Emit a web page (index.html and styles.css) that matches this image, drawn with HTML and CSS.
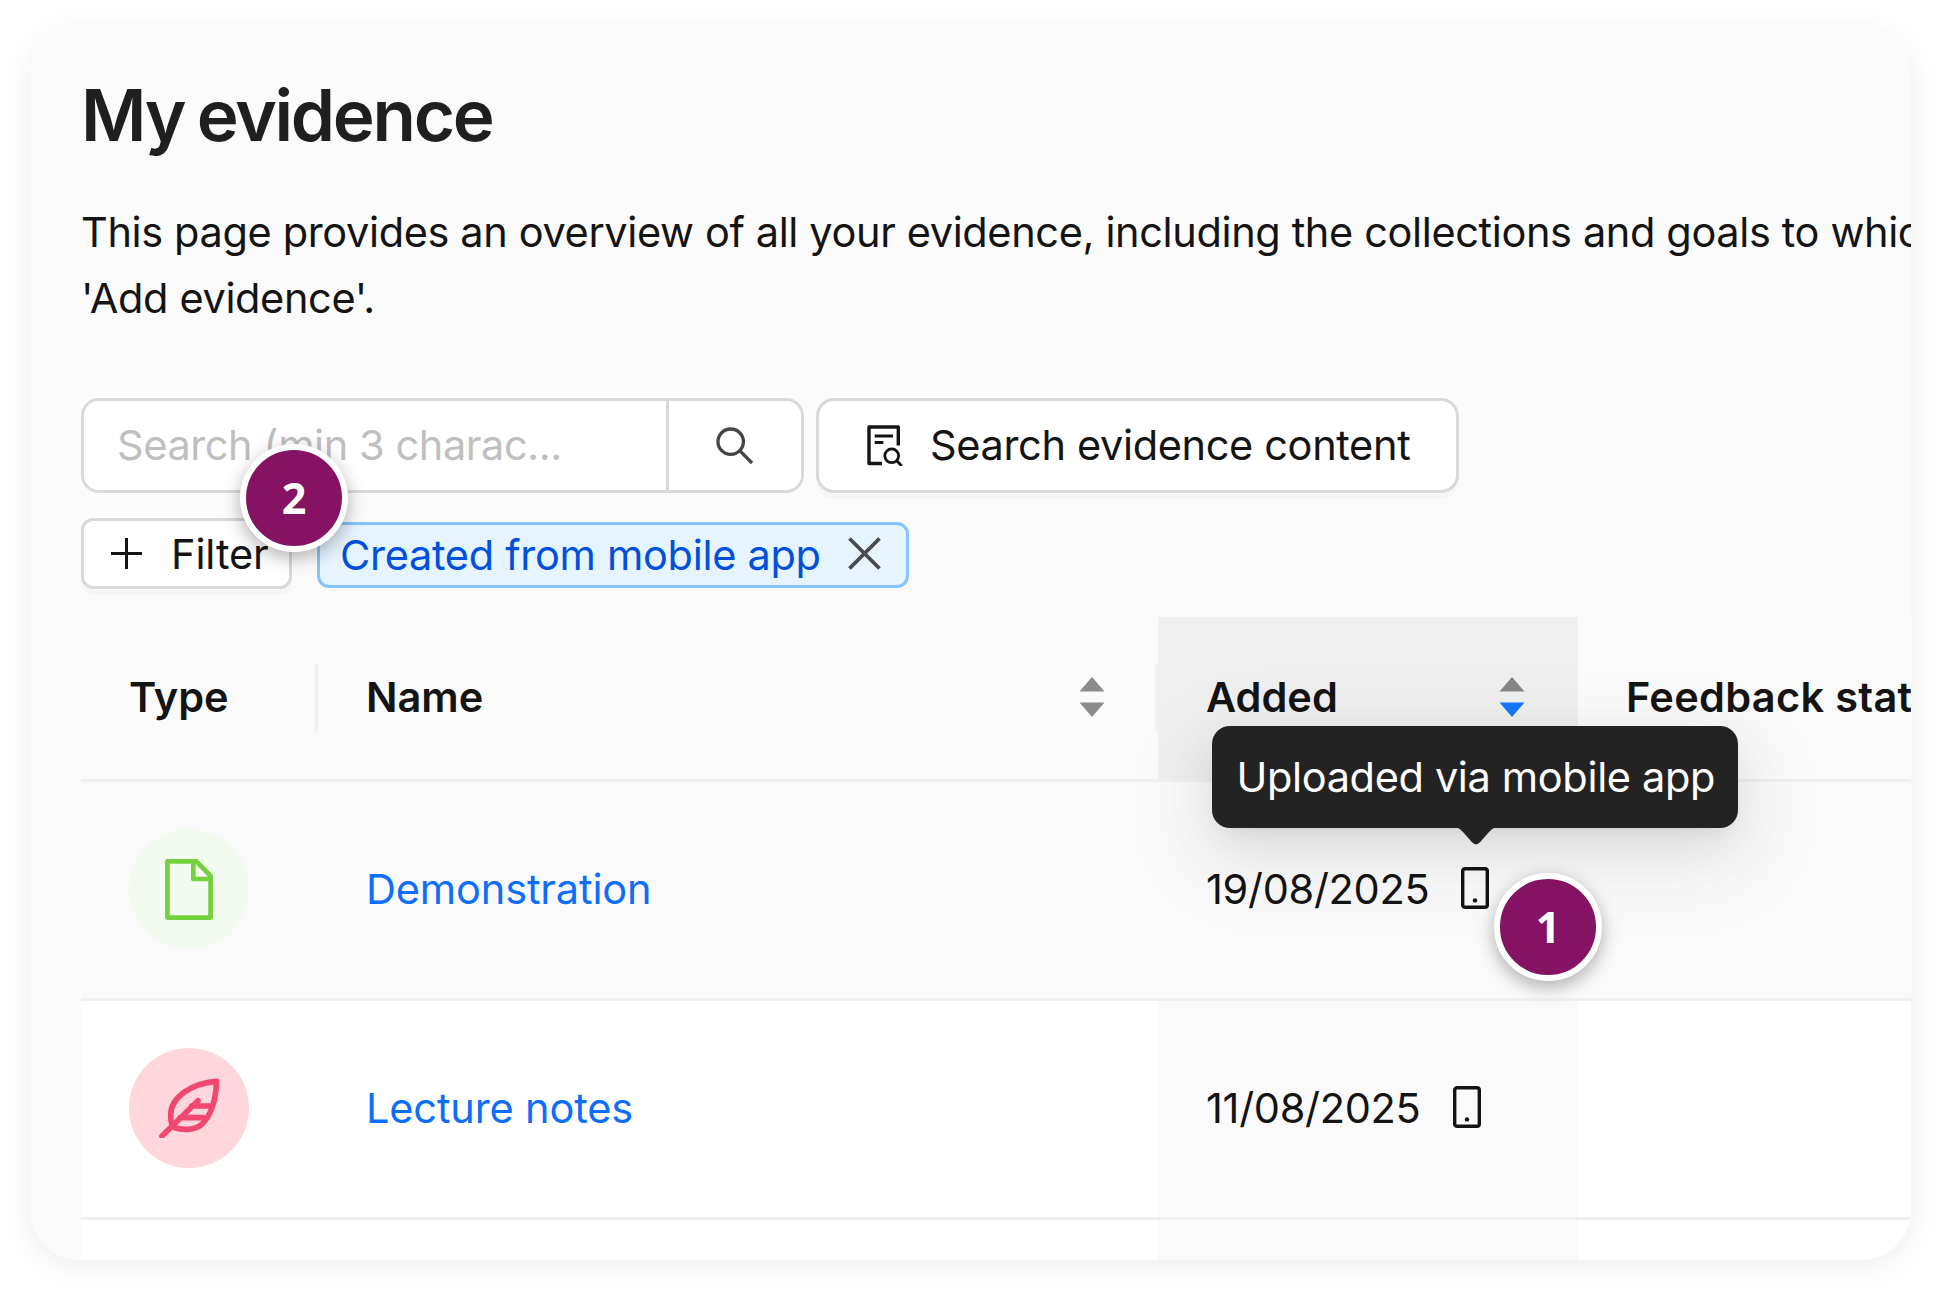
FILE: index.html
```html
<!DOCTYPE html>
<html lang="en">
<head>
    <meta charset="UTF-8">
    <meta name="viewport" content="width=device-width, initial-scale=1.0">
    <title>My evidence</title>
    <link rel="stylesheet" href="styles.css">
</head>
<body>

    <div class="panel">
        <h1>My evidence</h1>
        <p class="intro">This page provides an overview of all your evidence, including the collections and goals to which<br>'Add evidence'.</p>

        <div class="search-row">
            <div class="search-box">
                <input type="text" placeholder="Search (min 3 charac...">
                <button class="search-btn" aria-label="Search">
                    <svg width="38" height="38" viewBox="0 0 38 38" fill="none" stroke="#454545" stroke-width="3.3">
                        <circle cx="14.7" cy="14.7" r="12.7"/>
                        <path d="M23.7 23.7 36 36"/>
                    </svg>
                </button>
            </div>
            <button class="content-btn">
                <svg width="36" height="42" viewBox="0 0 36 42" fill="none" stroke="#141414" stroke-width="3.4">
                    <path d="M31.3 21.5V3H2V39.5H15" stroke-linejoin="round"/>
                    <path d="M7.7 12H26M7.7 18.5H16.3" stroke-width="3"/>
                    <circle cx="24.7" cy="31.8" r="6.9" stroke-width="2.8"/>
                    <path d="M29.7 36.8 34.8 42" stroke-width="2.8"/>
                </svg>
                <span>Search evidence content</span>
            </button>
        </div>

        <div class="filter-row">
            <button class="filter-btn">
                <svg width="31" height="31" viewBox="0 0 31 31" fill="none" stroke="#141414" stroke-width="3">
                    <path d="M15.5 0V31M0 15.5H31"/>
                </svg>
                <span>Filter</span>
            </button>
            <div class="tag">
                <span>Created from mobile app</span>
                <svg width="33" height="33" viewBox="0 0 33 33" fill="none" stroke="#484b4e" stroke-width="3.8">
                    <path d="M1.5 1.5 31.5 31.5M31.5 1.5 1.5 31.5"/>
                </svg>
            </div>
        </div>

        <table>
            <thead>
                <tr>
                    <th class="col-type">Type</th>
                    <th class="col-name">
                        <div class="sortable">
                            <span>Name</span>
                            <svg width="26" height="40" viewBox="0 0 26 40" fill="#8c8c8c">
                                <path d="M13 0 25.5 14.5H.5Z"/>
                                <path d="M13 40 25.5 25.5H.5Z"/>
                            </svg>
                        </div>
                    </th>
                    <th class="col-added">
                        <div class="sortable">
                            <span>Added</span>
                            <svg width="26" height="40" viewBox="0 0 26 40">
                                <path fill="#868686" d="M13 0 25.5 14.5H.5Z"/>
                                <path fill="#1677ff" d="M13 40 25.5 25.5H.5Z"/>
                            </svg>
                        </div>
                    </th>
                    <th class="col-feedback">Feedback status</th>
                </tr>
            </thead>
            <tbody>
                <tr class="active">
                    <td>
                        <div class="type-icon green">
                            <svg width="48" height="61" viewBox="0 0 48 61" fill="none" stroke="#73d13d" stroke-width="4.7" stroke-linejoin="round">
                                <path d="M2.4 2.4H31.5L45.6 17V58.6H2.4Z"/>
                                <path d="M28.3 2.4V20H45.6"/>
                            </svg>
                        </div>
                    </td>
                    <td><a href="#">Demonstration</a></td>
                    <td class="added">
                        <div class="date">
                            <span>19/08/2025</span>
                            <div class="phone">
                                <svg width="28" height="42" viewBox="0 0 28 42">
                                    <rect x="1.7" y="1.7" width="24.6" height="38.6" rx="2.4" fill="none" stroke="#141414" stroke-width="3.4"/>
                                    <circle cx="14" cy="33.4" r="2.2" fill="#141414"/>
                                </svg>
                                <div class="tooltip">
                                    Uploaded via mobile app
                                    <svg class="arrow" width="46" height="18" viewBox="0 0 46 18">
                                        <path fill="#232323" d="M0 0H46C41 0 39 2 36 5L27 15.3Q23 19.5 19 15.3L10 5C7 2 5 0 0 0Z"/>
                                    </svg>
                                </div>
                            </div>
                        </div>
                    </td>
                    <td></td>
                </tr>
                <tr>
                    <td>
                        <div class="type-icon pink">
                            <svg width="60" height="60" viewBox="0 0 180 180" fill="none" stroke="#f0486f" stroke-width="17" stroke-linecap="round" stroke-linejoin="round">
                                <path d="M173 10C98 16 35 56 35 112C35 128 37 139 42 146C62 157 104 158 126 141C152 118 170 74 173 10Z"/>
                                <path d="M9 174 117 68"/>
                                <path d="M98 84H154M64 119H132"/>
                            </svg>
                        </div>
                    </td>
                    <td><a href="#">Lecture notes</a></td>
                    <td class="added">
                        <div class="date">
                            <span>11/08/2025</span>
                            <div class="phone">
                                <svg width="28" height="42" viewBox="0 0 28 42">
                                    <rect x="1.7" y="1.7" width="24.6" height="38.6" rx="2.4" fill="none" stroke="#141414" stroke-width="3.4"/>
                                    <circle cx="14" cy="33.4" r="2.2" fill="#141414"/>
                                </svg>
                            </div>
                        </div>
                    </td>
                    <td></td>
                </tr>
                <tr>
                    <td></td>
                    <td></td>
                    <td class="added"></td>
                    <td></td>
                </tr>
            </tbody>
        </table>

        <div class="marker marker-one">1</div>
        <div class="marker marker-two">2</div>
    </div>

</body>
</html>
```
FILE: styles.css
```css
* {
    box-sizing: border-box;
}

body {
    font-family: "Inter", sans-serif;
    font-size: 41.5px;
    line-height: 66px;
    letter-spacing: -0.3px;
    color: #141414;
    background: #fff;
    height: 1293px;
    margin: 0;
    padding: 27px 30px 0;
}

.panel {
    position: relative;
    width: 1881px;
    height: 1233px;
    padding: 46px 0 0 51px;
    background: #fbfbfb;
    border-radius: 50px;
    box-shadow: 0 5px 30px rgba(0, 0, 0, 0.07);
    overflow: hidden;
}

h1 {
    margin: 0;
    font-size: 71px;
    font-weight: 600;
    line-height: 84px;
    letter-spacing: -2.3px;
    word-spacing: -3px;
    color: #1f1f1f;
}

.intro {
    margin: 42px 0 67px;
    letter-spacing: -0.37px;
    white-space: nowrap;
}

button, input {
    font: inherit;
    letter-spacing: inherit;
    color: #141414;
}

button {
    display: flex;
    align-items: center;
    background: #fff;
    border: 3px solid #d9d9d9;
    padding: 0;
    cursor: pointer;
}

.search-row {
    display: flex;
    gap: 12px;
    height: 95px;
}

.search-box {
    display: flex;
    width: 723px;
    background: #fff;
    border: 3px solid #d9d9d9;
    border-radius: 18px;
    overflow: hidden;
}

.search-box input {
    flex: 1;
    min-width: 0;
    padding: 0 0 2px 33px;
    border: none;
    outline: none;
    letter-spacing: -0.42px;
}

.search-box input::placeholder {
    color: #bfbfbf;
}

.search-btn {
    justify-content: center;
    width: 135px;
    border-width: 0 0 0 3px;
}

.content-btn {
    gap: 27px;
    width: 643px;
    padding: 0 0 2px 48px;
    border-radius: 18px;
    letter-spacing: -0.35px;
    box-shadow: 0 6px 0 rgba(0, 0, 0, 0.02);
}

.filter-row {
    display: flex;
    align-items: flex-start;
    gap: 25px;
    margin: 25px 0 28px;
    height: 71px;
}

.filter-btn {
    gap: 29px;
    width: 211px;
    height: 71px;
    padding-left: 27px;
    border-radius: 12px;
    letter-spacing: -0.1px;
    box-shadow: 0 6px 0 rgba(0, 0, 0, 0.02);
}

.tag {
    display: flex;
    align-items: center;
    justify-content: space-between;
    width: 592px;
    height: 66px;
    margin-top: 4px;
    padding: 0 25px 0 20px;
    background: #e6f4ff;
    border: 3px solid #84c4ff;
    border-radius: 12px;
    color: #0050dc;
}

.tag svg {
    margin-bottom: 3px;
}

table {
    width: 1830px;
    table-layout: fixed;
    border-collapse: separate;
    border-spacing: 0;
    background: #fff;
    border-top-left-radius: 24px;
}

th, td {
    padding: 0 0 2px 48px;
    text-align: left;
    border-bottom: 3px solid #f0f0f0;
    white-space: nowrap;
}

th {
    height: 165px;
    font-weight: 600;
    letter-spacing: 0;
    background: #fafafa;
}

td {
    height: 219px;
}

.col-type {
    width: 237px;
    border-top-left-radius: 24px;
    background: linear-gradient(#f0f0f0, #f0f0f0) right 47px / 3px 68px no-repeat #fafafa;
}

.col-name {
    width: 840px;
    background: linear-gradient(#f0f0f0, #f0f0f0) right 47px / 3px 68px no-repeat #fafafa;
}

.col-added {
    width: 420px;
    background: #efefef;
}

.col-feedback {
    letter-spacing: 0.3px;
}

.sortable {
    display: flex;
    align-items: center;
    justify-content: space-between;
    padding-right: 53px;
}

.active td, .added {
    background: #fafafa;
}

a {
    color: #0d6efd;
    text-decoration: none;
    letter-spacing: -0.15px;
}

.type-icon {
    display: flex;
    align-items: center;
    justify-content: center;
    width: 120px;
    height: 120px;
    border-radius: 50%;
}

.green {
    background: #f3faef;
}

.pink {
    background: #ffd6dc;
}

.date {
    display: flex;
    align-items: center;
    gap: 32px;
}

.phone {
    position: relative;
    height: 42px;
    margin-bottom: 3px;
}

.phone svg {
    display: block;
}

/* sits above the phone icon */
.tooltip {
    position: absolute;
    left: -249px;
    bottom: 81px;
    width: 526px;
    height: 102px;
    padding-left: 24px;
    line-height: 102px;
    letter-spacing: -0.35px;
    color: #fff;
    background: #232323;
    border-radius: 18px;
    box-shadow: 0 18px 48px rgba(0, 0, 0, 0.08), 0 9px 18px -12px rgba(0, 0, 0, 0.12), 0 27px 84px 24px rgba(0, 0, 0, 0.05);
}

.tooltip .arrow {
    position: absolute;
    left: 241px;
    top: 101px;
}

.marker {
    position: absolute;
    width: 108px;
    height: 108px;
    font-family: "Open Sans", sans-serif;
    font-size: 43px;
    font-weight: 700;
    line-height: 95px;
    letter-spacing: 0;
    text-align: center;
    color: #fff;
    background: #851262;
    border: 6px solid #fff;
    border-radius: 50%;
    box-shadow: 0 6px 18px rgba(0, 0, 0, 0.3);
}

.marker-one {
    left: 1464px;
    top: 846px;
}

.marker-two {
    left: 210px;
    top: 417px;
}
```
